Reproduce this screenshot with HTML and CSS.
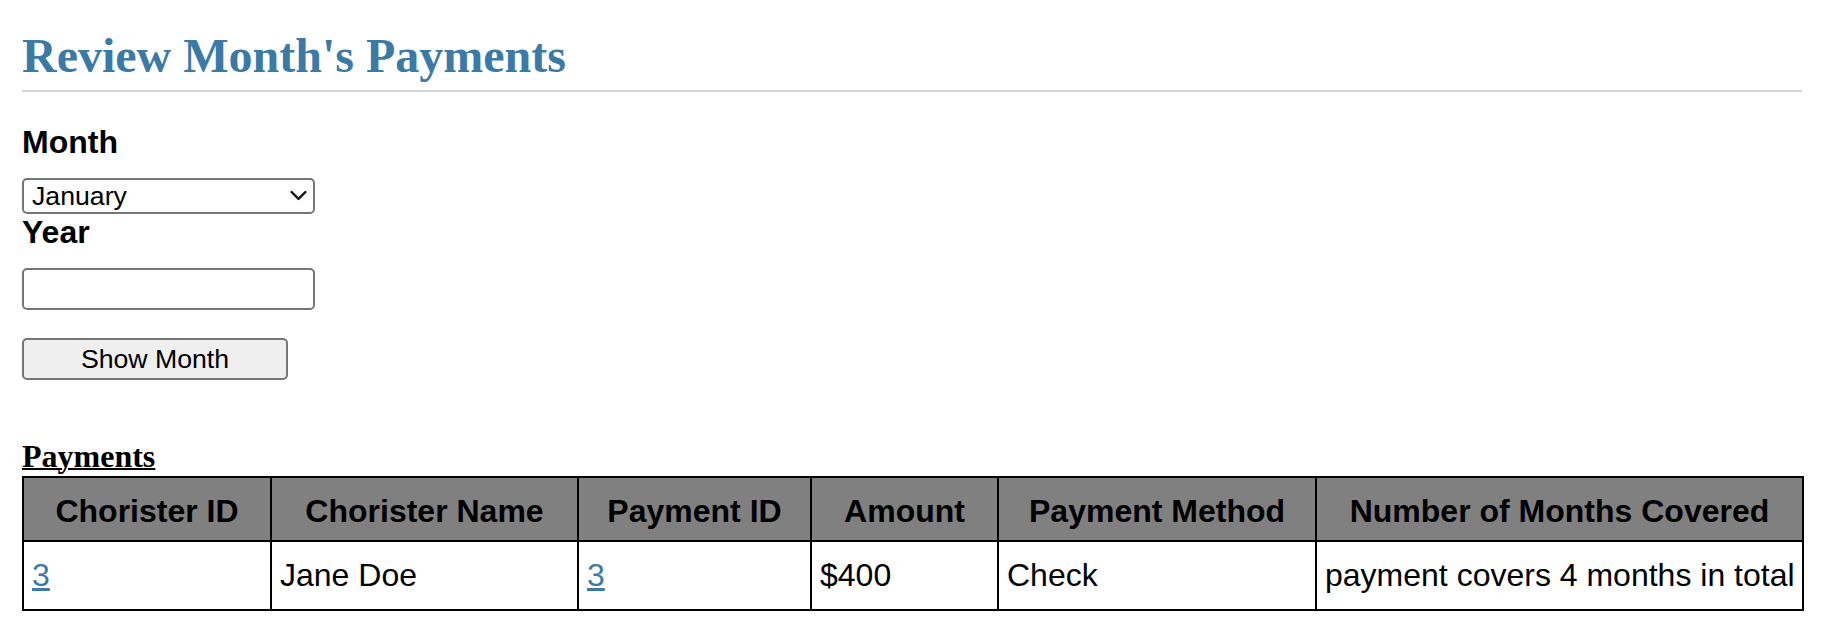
FILE: index.html
```html
<!DOCTYPE html>
<html lang="en">
<head>
<meta charset="utf-8">
<title>Review Month's Payments</title>
<link rel="stylesheet" href="styles.css">
</head>
<body>
<h1 class="page-title">Review Month's Payments</h1>
<form class="month-form">
  <label class="field-label" for="month">Month</label>
  <div class="select-wrap">
    <select id="month" class="month-select">
      <option>January</option>
      <option>February</option>
      <option>March</option>
      <option>April</option>
      <option>May</option>
      <option>June</option>
      <option>July</option>
      <option>August</option>
      <option>September</option>
      <option>October</option>
      <option>November</option>
      <option>December</option>
    </select>
    <svg class="chevron" width="17" height="11" viewBox="0 0 17 11" aria-hidden="true"><path d="M1.6 2 L8.5 8.9 L15.4 2" fill="none" stroke="#111" stroke-width="2.4" stroke-linecap="round" stroke-linejoin="round"/></svg>
  </div>
  <label class="field-label" for="year">Year</label>
  <input id="year" class="year-input" type="text">
  <button type="button" class="show-btn">Show Month</button>
</form>
<h4 class="section-title">Payments</h4>
<table class="payments">
  <colgroup>
    <col class="c1"><col class="c2"><col class="c3"><col class="c4"><col class="c5"><col class="c6">
  </colgroup>
  <thead>
    <tr>
      <th>Chorister ID</th>
      <th>Chorister Name</th>
      <th>Payment ID</th>
      <th>Amount</th>
      <th>Payment Method</th>
      <th>Number of Months Covered</th>
    </tr>
  </thead>
  <tbody>
    <tr>
      <td><a href="#">3</a></td>
      <td>Jane Doe</td>
      <td><a href="#">3</a></td>
      <td>$400</td>
      <td>Check</td>
      <td>payment covers 4 months in total</td>
    </tr>
  </tbody>
</table>
</body>
</html>
```
FILE: styles.css
```css
html, body {
  background: #fff;
}
body {
  margin: 0;
  padding: 0 20px 40px 22px;
  font-family: "Liberation Sans", Arial, Helvetica, sans-serif;
  color: #000;
}
.page-title {
  margin: 28px 0 0;
  padding-bottom: 6px;
  border-bottom: 2px solid #d3d3d3;
  font-family: "Liberation Serif", "Times New Roman", serif;
  font-size: 48px;
  line-height: 56px;
  font-weight: bold;
  color: #3c7aa6;
}
.month-form {
  display: flex;
  flex-direction: column;
  align-items: flex-start;
  margin: 0;
}
.field-label {
  display: block;
  font-size: 32px;
  line-height: 37px;
  font-weight: bold;
}
.field-label:first-child {
  margin-top: 32px;
}
.select-wrap {
  position: relative;
  margin-top: 17px;
  width: 293px;
  height: 36px;
}
.month-select {
  appearance: none;
  -webkit-appearance: none;
  box-sizing: border-box;
  width: 293px;
  height: 36px;
  margin: 0;
  padding: 0 0 0 8px;
  border: 2px solid #767676;
  border-radius: 5px;
  background: #fff;
  font-family: "Liberation Sans", Arial, sans-serif;
  font-size: 26.67px;
  color: #000;
}
.chevron {
  position: absolute;
  right: 8px;
  top: 12px;
  pointer-events: none;
}
.year-input {
  box-sizing: border-box;
  width: 293px;
  height: 42px;
  margin: 17px 0 0;
  border: 2px solid #767676;
  border-radius: 5px;
  background: #fff;
  font-size: 26.67px;
  padding: 0 6px;
}
.show-btn {
  box-sizing: border-box;
  width: 266px;
  height: 42px;
  margin: 28px 0 0;
  padding: 0;
  border: 2px solid #767676;
  border-radius: 5px;
  background: #efefef;
  font-family: "Liberation Sans", Arial, sans-serif;
  font-size: 26.67px;
  color: #000;
}
.section-title {
  margin: 57px 0 0;
  font-family: "Liberation Serif", "Times New Roman", serif;
  font-size: 32px;
  line-height: 38px;
  font-weight: bold;
  text-decoration: underline;
  text-decoration-thickness: 2px;
}
.payments {
  margin-top: 1px;
  width: 1780px;
  table-layout: fixed;
  border-collapse: collapse;
  border: 2px solid #000;
  font-size: 32px;
}
.c1 { width: 248px; }
.c2 { width: 307px; }
.c3 { width: 233px; }
.c4 { width: 187px; }
.c5 { width: 318px; }
.c6 { width: 487px; }
.payments th,
.payments td {
  border: 2px solid #000;
  line-height: 37px;
  white-space: nowrap;
}
.payments th {
  background: #808080;
  font-weight: bold;
  text-align: center;
  padding: 15px 8px 10px;
}
.payments td {
  text-align: left;
  padding: 15px 8px;
}
.payments a {
  color: #3c7aa6;
  text-decoration: underline;
}
```
